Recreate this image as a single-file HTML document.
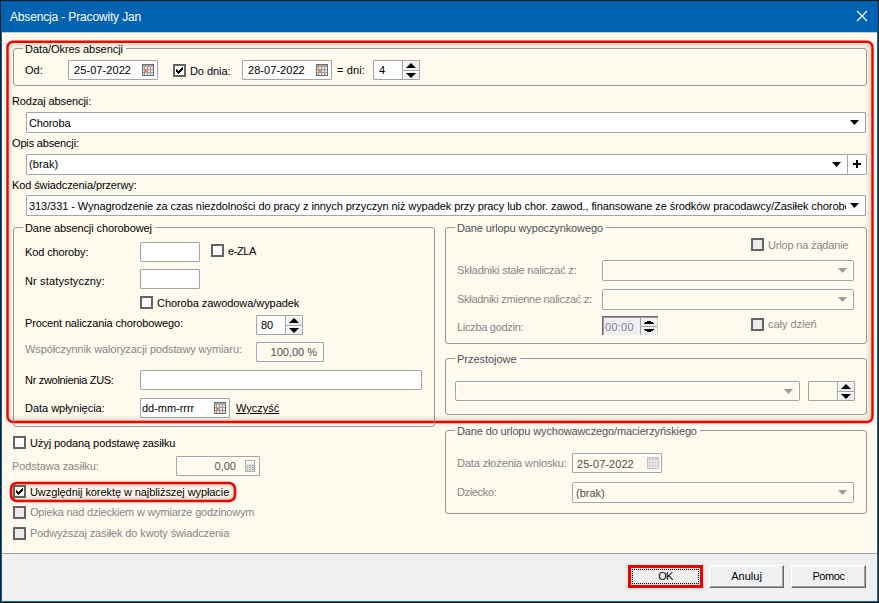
<!DOCTYPE html>
<html><head><meta charset="utf-8"><style>
*{margin:0;padding:0;box-sizing:border-box}
html,body{width:879px;height:603px;overflow:hidden;background:#FEFAEE}
body{position:relative;font-family:"Liberation Sans",sans-serif;font-size:11px;color:#000}
.a{position:absolute}
.t{position:absolute;font-size:11px;line-height:13px;white-space:nowrap;color:#000}
.gr{color:#878787}
.dg{color:#4f5158}
.box{position:absolute;border:1px solid #A4A4A4;background:#fff;border-radius:1px}
.dbox{box-shadow:inset 1px 1px 0 #fff}
.dis{background:#FEFAEE;box-shadow:inset 1px 1px 0 #fff,inset -1px -1px 0 #fff}
.rr{border-radius:2px}
.gb{position:absolute;border:1px solid #999;border-radius:3px}
.gl{background:#FEFAEE;padding:0 3px 0 2px}
.cb{position:absolute;width:13px;height:13px;border:2px solid #646464;background:#fff}
.cbd{background:#ececec}
.cbd2{border-color:#b4b4b4;background:#e8e8e8}
.sbtn{background:#EFEFEF;box-shadow:inset 1px 1px 0 #fff}
.shd{box-shadow:inset 0 0 5px 1px rgba(80,60,30,.30),0 0 3px 2px rgba(80,60,30,.16)}
.btn{position:absolute;width:75px;height:23px;background:#F0F0F0;border-top:1px solid #fff;border-left:1px solid #fff;border-right:1px solid #696969;border-bottom:1px solid #696969;box-shadow:inset -1px -1px 0 #A0A0A0}
</style></head><body>
<div class="a" style="left:0;top:0;width:879px;height:603px;border:1px solid #1b1b1b;border-right-color:#2a2a2a"></div>
<div class="a" style="left:1px;top:1px;width:877px;height:601px;border:1px solid #0A64AD;border-top:none"></div>
<div class="a" style="left:1px;top:1px;width:877px;height:31px;background:#0063B1"></div>
<div class="a" style="left:2px;top:32px;width:875px;height:1px;background:#cfc7b6"></div>
<div class="a" style="left:2px;top:33px;width:875px;height:1px;background:#fffdf3"></div>
<svg class="a" style="left:856px;top:10px" width="12" height="12" viewBox="0 0 12 12"><path d="M1 1L11 11M11 1L1 11" stroke="#fff" stroke-width="1.1"/></svg>
<div class="a" style="left:2px;top:553px;width:875px;height:1px;background:#A0A0A0"></div>
<div class="a" style="left:2px;top:554px;width:875px;height:47px;background:#F0F0F0"></div>
<svg class="a" style="left:0;top:0" width="879" height="603"><rect x="7.5" y="41.8" width="865" height="380.2" rx="5.5" fill="none" stroke="#FF0000" stroke-width="2.4"/></svg>
<div class="gb" style="left:13px;top:48px;width:854px;height:38px"></div>
<div class="box dbox" style="left:68px;top:60px;width:90px;height:20px;"></div>
<svg class="a" style="left:142px;top:64px" width="12" height="12" viewBox="0 0 12 12" shape-rendering="crispEdges">
<rect x="0" y="0" width="12" height="12" fill="#6e6e6e"/>
<rect x="1" y="1" width="10" height="10" fill="#9a9a9a"/>
<rect x="1" y="1" width="10" height="2" fill="#a6a6a6"/>
<g fill="#e6e9eb"><rect x="1" y="3" width="1" height="2"/><rect x="3" y="3" width="2" height="2"/><rect x="6" y="3" width="2" height="2"/><rect x="9" y="3" width="2" height="2"/><rect x="1" y="6" width="1" height="2"/><rect x="3" y="6" width="2" height="2"/><rect x="6" y="6" width="2" height="2"/><rect x="9" y="6" width="2" height="2"/><rect x="1" y="9" width="1" height="2"/><rect x="3" y="9" width="2" height="2"/><rect x="6" y="9" width="2" height="2"/><rect x="9" y="9" width="2" height="2"/></g>
<rect x="2" y="5" width="3" height="3" fill="#ec8a60"/><rect x="3" y="6" width="1" height="1" fill="#f45a1a"/>
</svg>
<div class="cb" style="left:173px;top:64px"><svg width="9" height="9" viewBox="0 0 9 9" style="position:absolute;left:0;top:0" shape-rendering="crispEdges"><path d="M7 1H8V4H7V5H6V6H5V7H4V8H3V7H2V6H1V3H2V4H3V5H4V4H5V3H6V2H7Z" fill="#000"/></svg></div>
<div class="box dbox" style="left:242px;top:60px;width:90px;height:20px;"></div>
<svg class="a" style="left:316px;top:64px" width="12" height="12" viewBox="0 0 12 12" shape-rendering="crispEdges">
<rect x="0" y="0" width="12" height="12" fill="#6e6e6e"/>
<rect x="1" y="1" width="10" height="10" fill="#9a9a9a"/>
<rect x="1" y="1" width="10" height="2" fill="#a6a6a6"/>
<g fill="#e6e9eb"><rect x="1" y="3" width="1" height="2"/><rect x="3" y="3" width="2" height="2"/><rect x="6" y="3" width="2" height="2"/><rect x="9" y="3" width="2" height="2"/><rect x="1" y="6" width="1" height="2"/><rect x="3" y="6" width="2" height="2"/><rect x="6" y="6" width="2" height="2"/><rect x="9" y="6" width="2" height="2"/><rect x="1" y="9" width="1" height="2"/><rect x="3" y="9" width="2" height="2"/><rect x="6" y="9" width="2" height="2"/><rect x="9" y="9" width="2" height="2"/></g>
<rect x="2" y="5" width="3" height="3" fill="#ec8a60"/><rect x="3" y="6" width="1" height="1" fill="#f45a1a"/>
</svg>
<div class="box" style="left:373px;top:60px;width:47px;height:20px;background:#fff"></div>
<div class="a" style="left:402px;top:61px;width:17px;height:18px;background:#A4A4A4"></div>
<div class="a sbtn" style="left:403px;top:61px;width:16px;height:9px"></div>
<div class="a sbtn" style="left:403px;top:71px;width:16px;height:8px"></div>
<svg class="a" style="left:406.0px;top:63px" width="10" height="5" viewBox="0 0 10 5"><path d="M0 5H10L5 0Z" fill="#000"/></svg>
<svg class="a" style="left:406.0px;top:73px" width="10" height="5" viewBox="0 0 10 5"><path d="M0 0H10L5 5Z" fill="#000"/></svg>
<div class="box" style="left:26px;top:112px;width:840px;height:21px;"></div>
<svg class="a" style="left:850px;top:120px" width="9" height="5" viewBox="0 0 9 5"><path d="M0 0H9L4.5 5Z" fill="#000"/></svg>
<div class="box" style="left:26px;top:154px;width:822px;height:21px;"></div>
<svg class="a" style="left:832px;top:162px" width="9" height="5" viewBox="0 0 9 5"><path d="M0 0H9L4.5 5Z" fill="#000"/></svg>
<div class="box" style="left:847px;top:154px;width:20px;height:21px;"></div>
<svg class="a" style="left:853px;top:160px" width="8" height="8" viewBox="0 0 8 8" shape-rendering="crispEdges"><path d="M3 0H5V3H8V5H5V8H3V5H0V3H3Z" fill="#000"/></svg>
<div class="box" style="left:26px;top:195px;width:840px;height:21px;"></div>
<svg class="a" style="left:850px;top:203px" width="9" height="5" viewBox="0 0 9 5"><path d="M0 0H9L4.5 5Z" fill="#000"/></svg>
<div class="gb" style="left:13px;top:227px;width:422px;height:200px"></div>
<div class="box" style="left:140px;top:242px;width:60px;height:20px;"></div>
<div class="cb" style="left:211px;top:244px"></div>
<div class="box" style="left:140px;top:269px;width:60px;height:20px;"></div>
<div class="cb" style="left:140px;top:296px"></div>
<div class="box" style="left:256px;top:315px;width:47px;height:20px;background:#fff"></div>
<div class="a" style="left:285px;top:316px;width:17px;height:18px;background:#A4A4A4"></div>
<div class="a sbtn" style="left:286px;top:316px;width:16px;height:9px"></div>
<div class="a sbtn" style="left:286px;top:326px;width:16px;height:8px"></div>
<svg class="a" style="left:289.0px;top:318px" width="10" height="5" viewBox="0 0 10 5"><path d="M0 5H10L5 0Z" fill="#000"/></svg>
<svg class="a" style="left:289.0px;top:328px" width="10" height="5" viewBox="0 0 10 5"><path d="M0 0H10L5 5Z" fill="#000"/></svg>
<div class="box dis" style="left:256px;top:342px;width:68px;height:20px;"></div>
<div class="box" style="left:140px;top:370px;width:282px;height:20px;"></div>
<div class="box dbox" style="left:140px;top:398px;width:90px;height:20px;"></div>
<svg class="a" style="left:214px;top:402px" width="12" height="12" viewBox="0 0 12 12" shape-rendering="crispEdges">
<rect x="0" y="0" width="12" height="12" fill="#6e6e6e"/>
<rect x="1" y="1" width="10" height="10" fill="#9a9a9a"/>
<rect x="1" y="1" width="10" height="2" fill="#a6a6a6"/>
<g fill="#e6e9eb"><rect x="1" y="3" width="1" height="2"/><rect x="3" y="3" width="2" height="2"/><rect x="6" y="3" width="2" height="2"/><rect x="9" y="3" width="2" height="2"/><rect x="1" y="6" width="1" height="2"/><rect x="3" y="6" width="2" height="2"/><rect x="6" y="6" width="2" height="2"/><rect x="9" y="6" width="2" height="2"/><rect x="1" y="9" width="1" height="2"/><rect x="3" y="9" width="2" height="2"/><rect x="6" y="9" width="2" height="2"/><rect x="9" y="9" width="2" height="2"/></g>
<rect x="2" y="5" width="3" height="3" fill="#ec8a60"/><rect x="3" y="6" width="1" height="1" fill="#f45a1a"/>
</svg>
<div class="gb" style="left:445px;top:227px;width:422px;height:117px"></div>
<div class="cb cbd" style="left:751px;top:238px"></div>
<div class="box dis rr" style="left:602px;top:260px;width:252px;height:21px;"></div>
<svg class="a" style="left:838px;top:268px" width="9" height="5" viewBox="0 0 9 5"><path d="M0 0H9L4.5 5Z" fill="#9a9a9a"/></svg>
<div class="box dis rr" style="left:602px;top:289px;width:252px;height:21px;"></div>
<svg class="a" style="left:838px;top:297px" width="9" height="5" viewBox="0 0 9 5"><path d="M0 0H9L4.5 5Z" fill="#9a9a9a"/></svg>
<div class="a" style="left:602px;top:316px;width:56px;height:19px;background:#F0F0F0;border-top:1px solid #696969;border-left:1px solid #696969;box-shadow:inset 1px 1px 0 #a0a0a0"></div>
<div class="a" style="left:640px;top:318px;width:1px;height:17px;background:#A4A4A4"></div>
<div class="a" style="left:641px;top:326px;width:16px;height:1px;background:#A4A4A4"></div>
<div class="a" style="left:657px;top:318px;width:1px;height:17px;background:#d8d8d8"></div>
<svg class="a" style="left:644px;top:321px" width="10" height="3" viewBox="0 0 10 3" shape-rendering="crispEdges"><path d="M3 0H7V1H9V2H10V3H0V2H1V1H3Z" fill="#000"/></svg>
<svg class="a" style="left:644px;top:329px" width="10" height="3" viewBox="0 0 10 3" shape-rendering="crispEdges"><path d="M0 0H10V1H9V2H7V3H3V2H1V1H0Z" fill="#000"/></svg>
<div class="cb cbd" style="left:751px;top:318px"></div>
<div class="gb" style="left:445px;top:358px;width:422px;height:57px"></div>
<div class="box dis rr" style="left:455px;top:381px;width:345px;height:20px;"></div>
<svg class="a" style="left:784px;top:389px" width="9" height="5" viewBox="0 0 9 5"><path d="M0 0H9L4.5 5Z" fill="#9a9a9a"/></svg>
<div class="box" style="left:808px;top:381px;width:47px;height:20px;background:#FEFAEE"></div>
<div class="a" style="left:837px;top:382px;width:17px;height:18px;background:#A4A4A4"></div>
<div class="a sbtn" style="left:838px;top:382px;width:16px;height:9px"></div>
<div class="a sbtn" style="left:838px;top:392px;width:16px;height:8px"></div>
<svg class="a" style="left:841.0px;top:384px" width="10" height="5" viewBox="0 0 10 5"><path d="M0 5H10L5 0Z" fill="#000"/></svg>
<svg class="a" style="left:841.0px;top:394px" width="10" height="5" viewBox="0 0 10 5"><path d="M0 0H10L5 5Z" fill="#000"/></svg>
<div class="cb" style="left:13px;top:436px"></div>
<div class="box dis" style="left:176px;top:456px;width:84px;height:20px;"></div>
<svg class="a" style="left:245px;top:460px" width="10" height="12" viewBox="0 0 10 12" shape-rendering="crispEdges">
<rect x="0" y="0" width="10" height="12" fill="#b0b0b0"/><rect x="1" y="1" width="8" height="10" fill="#e4e4e4"/><rect x="1" y="1" width="8" height="3" fill="#f6f6f6"/>
<g fill="#a0a0a0"><rect x="2" y="5" width="1" height="1"/><rect x="4" y="5" width="2" height="1"/><rect x="7" y="5" width="2" height="1"/>
<rect x="2" y="7" width="1" height="1"/><rect x="4" y="7" width="2" height="1"/><rect x="7" y="7" width="2" height="1"/>
<rect x="2" y="9" width="1" height="1"/><rect x="4" y="9" width="2" height="1"/><rect x="7" y="9" width="2" height="1"/></g></svg>
<svg class="a" style="left:0;top:470px" width="260" height="40"><rect x="11" y="13" width="224" height="18" rx="6" fill="none" stroke="#FF0000" stroke-width="2.6"/></svg>
<div class="cb" style="left:13px;top:485px"><svg width="9" height="9" viewBox="0 0 9 9" style="position:absolute;left:0;top:0" shape-rendering="crispEdges"><path d="M7 1H8V4H7V5H6V6H5V7H4V8H3V7H2V6H1V3H2V4H3V5H4V4H5V3H6V2H7Z" fill="#000"/></svg></div>
<div class="cb cbd" style="left:13px;top:506px"></div>
<div class="cb cbd" style="left:13px;top:527px"></div>
<div class="gb" style="left:445px;top:430px;width:422px;height:84px"></div>
<div class="box dis dbox" style="left:572px;top:453px;width:90px;height:20px;"></div>
<svg class="a" style="left:647px;top:457px" width="12" height="12" viewBox="0 0 12 12" shape-rendering="crispEdges">
<rect x="0" y="0" width="12" height="12" fill="#c4c4c4"/>
<rect x="1" y="1" width="10" height="10" fill="#d2d2d2"/>
<g fill="#eeeeee"><rect x="1" y="3" width="1" height="2"/><rect x="3" y="3" width="2" height="2"/><rect x="6" y="3" width="2" height="2"/><rect x="9" y="3" width="2" height="2"/><rect x="1" y="6" width="1" height="2"/><rect x="3" y="6" width="2" height="2"/><rect x="6" y="6" width="2" height="2"/><rect x="9" y="6" width="2" height="2"/><rect x="1" y="9" width="1" height="2"/><rect x="3" y="9" width="2" height="2"/><rect x="6" y="9" width="2" height="2"/><rect x="9" y="9" width="2" height="2"/></g>
</svg>
<div class="box dis rr" style="left:572px;top:482px;width:282px;height:21px;"></div>
<svg class="a" style="left:838px;top:490px" width="9" height="5" viewBox="0 0 9 5"><path d="M0 0H9L4.5 5Z" fill="#9a9a9a"/></svg>
<div class="btn" style="left:709px;top:565px"></div>
<div class="btn" style="left:791px;top:565px"></div>
<div class="a" style="left:628px;top:565px;width:75px;height:23px;background:#F0F0F0;border:3px solid #E60000;box-shadow:0 0 4px rgba(0,0,0,.15),inset 0 0 4px rgba(0,0,0,.18)"></div>
<div class="a" style="left:632px;top:569px;width:67px;height:15px;border:1px dotted #000"></div>
<div class="t gl" style="left:23px;top:43px;letter-spacing:-0.058px;">Data/Okres absencji</div>
<div class="t " style="left:25px;top:64px;">Od:</div>
<div class="t " style="left:74px;top:64px;letter-spacing:0.080px;">25-07-2022</div>
<div class="t " style="left:190px;top:65px;letter-spacing:-0.069px;">Do dnia:</div>
<div class="t " style="left:248px;top:64px;letter-spacing:0.052px;">28-07-2022</div>
<div class="t " style="left:337px;top:64px;letter-spacing:0.106px;">= dni:</div>
<div class="t " style="left:379px;top:64px;">4</div>
<div class="t " style="left:12px;top:95px;letter-spacing:-0.101px;">Rodzaj absencji:</div>
<div class="t " style="left:29px;top:117px;letter-spacing:-0.117px;">Choroba</div>
<div class="t " style="left:12px;top:137px;letter-spacing:-0.161px;">Opis absencji:</div>
<div class="t " style="left:29px;top:158px;letter-spacing:0.093px;">(brak)</div>
<div class="t " style="left:12px;top:179px;letter-spacing:-0.107px;">Kod świadczenia/przerwy:</div>
<div class="t " style="left:29px;top:200px;letter-spacing:-0.076px;width:817px;overflow:hidden">313/331 - Wynagrodzenie za czas niezdolności do pracy z innych przyczyn niż wypadek przy pracy lub chor. zawod., finansowane ze środków pracodawcy/Zasiłek chorobowy</div>
<div class="t gl" style="left:23px;top:222px;letter-spacing:-0.088px;">Dane absencji chorobowej</div>
<div class="t " style="left:25px;top:246px;letter-spacing:-0.121px;">Kod choroby:</div>
<div class="t " style="left:228px;top:245px;letter-spacing:-0.417px;">e-ZLA</div>
<div class="t " style="left:25px;top:275px;letter-spacing:0.142px;">Nr statystyczny:</div>
<div class="t " style="left:157px;top:297px;letter-spacing:-0.061px;">Choroba zawodowa/wypadek</div>
<div class="t " style="left:25px;top:317px;letter-spacing:-0.135px;">Procent naliczania chorobowego:</div>
<div class="t " style="left:261px;top:319px;">80</div>
<div class="t gr" style="left:25px;top:343px;letter-spacing:-0.090px;">Współczynnik waloryzacji podstawy wymiaru:</div>
<div class="t dg" style="left:256px;top:346px;width:61px;text-align:right">100,00 %</div>
<div class="t " style="left:25px;top:374px;letter-spacing:-0.308px;">Nr zwolnienia ZUS:</div>
<div class="t " style="left:25px;top:402px;letter-spacing:-0.026px;">Data wpłynięcia:</div>
<div class="t " style="left:142px;top:402px;letter-spacing:-0.039px;">dd-mm-rrrr</div>
<div class="t " style="left:236px;top:402px;letter-spacing:0.001px;text-decoration:underline">Wyczyść</div>
<div class="t gl dg" style="left:455px;top:222px;letter-spacing:-0.128px;">Dane urlopu wypoczynkowego</div>
<div class="t gr" style="left:768px;top:239px;letter-spacing:-0.171px;">Urlop na żądanie</div>
<div class="t gr" style="left:457px;top:264px;letter-spacing:-0.192px;">Składniki stałe naliczać z:</div>
<div class="t gr" style="left:457px;top:293px;letter-spacing:-0.289px;">Składniki zmienne naliczać z:</div>
<div class="t gr" style="left:457px;top:321px;letter-spacing:-0.287px;">Liczba godzin:</div>
<div class="t " style="left:605px;top:321px;letter-spacing:0.267px;color:#7f7fa0">00:00</div>
<div class="t gr" style="left:768px;top:318px;letter-spacing:-0.036px;">cały dzień</div>
<div class="t gl dg" style="left:455px;top:353px;letter-spacing:-0.032px;">Przestojowe</div>
<div class="t " style="left:30px;top:437px;letter-spacing:-0.092px;">Użyj podaną podstawę zasiłku</div>
<div class="t gr" style="left:12px;top:460px;letter-spacing:-0.078px;">Podstawa zasiłku:</div>
<div class="t dg" style="left:176px;top:460px;width:60px;text-align:right">0,00</div>
<div class="t " style="left:30px;top:486px;letter-spacing:-0.077px;">Uwzględnij korektę w najbliższej wypłacie</div>
<div class="t gr" style="left:30px;top:506px;letter-spacing:-0.208px;">Opieka nad dzieckiem w wymiarze godzinowym</div>
<div class="t gr" style="left:30px;top:527px;letter-spacing:-0.129px;">Podwyższaj zasiłek do kwoty świadczenia</div>
<div class="t gl dg" style="left:455px;top:425px;letter-spacing:-0.135px;">Dane do urlopu wychowawczego/macierzyńskiego</div>
<div class="t gr" style="left:457px;top:457px;letter-spacing:-0.132px;">Data złożenia wniosku:</div>
<div class="t dg" style="left:577px;top:458px;letter-spacing:0.052px;">25-07-2022</div>
<div class="t gr" style="left:457px;top:486px;letter-spacing:-0.348px;">Dziecko:</div>
<div class="t dg" style="left:576px;top:487px;">(brak)</div>
<div class="t " style="left:628px;top:570px;letter-spacing:-0.606px;width:75px;text-align:center">OK</div>
<div class="t " style="left:709px;top:570px;letter-spacing:0.024px;width:75px;text-align:center">Anuluj</div>
<div class="t " style="left:791px;top:570px;letter-spacing:-0.412px;width:75px;text-align:center">Pomoc</div>
<div class="t " style="left:10px;top:10px;letter-spacing:-0.154px;color:#fff;font-size:12px;line-height:14px">Absencja - Pracowity Jan</div>
<div class="a shd" style="left:8px;top:43px;width:863px;height:378px;border-radius:4px"></div>
<div class="a shd" style="left:12px;top:484px;width:222px;height:16px;border-radius:4px"></div>
</body></html>
